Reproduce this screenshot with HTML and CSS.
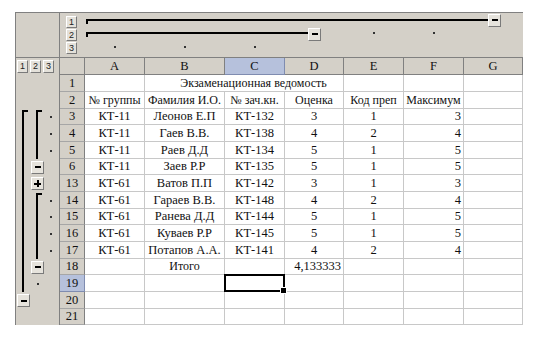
FILE: index.html
```html
<!DOCTYPE html>
<html lang="ru">
<head>
<meta charset="utf-8">
<title>Экзаменационная ведомость</title>
<link rel="stylesheet" href="styles.css">
</head>
<body>
<div class="sheet">
  <div class="top">
    <div class="corner"></div>
    <div class="levels">
      <span class="lb">1</span><span class="lb">2</span><span class="lb">3</span>
    </div>
    <div class="col-outline">
      <div class="cbar cbar1"><span class="line"></span><span class="ob minus"></span></div>
      <div class="cbar cbar2"><span class="line"></span><span class="ob minus"></span></div>
      <span class="dot dot2 ce"></span>
      <span class="dot dot2 cf"></span>
      <span class="dot dot3 ca"></span>
      <span class="dot dot3 cb"></span>
      <span class="dot dot3 cc"></span>
    </div>
  </div>
  <div class="main">
    <div class="side">
      <div class="side-levels">
        <span class="lb">1</span><span class="lb">2</span><span class="lb">3</span>
      </div>
      <div class="row-outline">
        <span class="br br1"></span>
        <span class="ob minus m1"></span>
        <span class="br br2a"></span>
        <span class="ob minus m2a"></span>
        <span class="ob plus p2"></span>
        <span class="br br2b"></span>
        <span class="ob minus m2b"></span>
        <span class="rdot r3"></span>
        <span class="rdot r4"></span>
        <span class="rdot r5"></span>
        <span class="rdot r8"></span>
        <span class="rdot r9"></span>
        <span class="rdot r10"></span>
        <span class="rdot r11"></span>
        <span class="rdot2 r13"></span>
      </div>
    </div>
    <div class="grid">
      <div class="ch"></div><div class="ch">A</div><div class="ch">B</div><div class="ch selh">C</div><div class="ch">D</div><div class="ch">E</div><div class="ch">F</div><div class="ch">G</div>

      <div class="rh">1</div><div class="c"></div><div class="c title">Экзаменационная ведомость</div><div class="c"></div><div class="c"></div><div class="c"></div>

      <div class="rh">2</div><div class="c hd">№ группы</div><div class="c hd">Фамилия И.О.</div><div class="c hd">№ зач.кн.</div><div class="c hd">Оценка</div><div class="c hd">Код преп</div><div class="c hd">Максимум</div><div class="c"></div>

      <div class="rh">3</div><div class="c">КТ-11</div><div class="c">Леонов Е.П</div><div class="c">КТ-132</div><div class="c">3</div><div class="c">1</div><div class="c r">3</div><div class="c"></div>
      <div class="rh">4</div><div class="c">КТ-11</div><div class="c">Гаев В.В.</div><div class="c">КТ-138</div><div class="c">4</div><div class="c">2</div><div class="c r">4</div><div class="c"></div>
      <div class="rh">5</div><div class="c">КТ-11</div><div class="c">Раев Д.Д</div><div class="c">КТ-134</div><div class="c">5</div><div class="c">1</div><div class="c r">5</div><div class="c"></div>
      <div class="rh">6</div><div class="c">КТ-11</div><div class="c">Заев Р.Р</div><div class="c">КТ-135</div><div class="c">5</div><div class="c">1</div><div class="c r">5</div><div class="c"></div>
      <div class="rh">13</div><div class="c">КТ-61</div><div class="c">Ватов П.П</div><div class="c">КТ-142</div><div class="c">3</div><div class="c">1</div><div class="c r">3</div><div class="c"></div>
      <div class="rh">14</div><div class="c">КТ-61</div><div class="c">Гараев В.В.</div><div class="c">КТ-148</div><div class="c">4</div><div class="c">2</div><div class="c r">4</div><div class="c"></div>
      <div class="rh">15</div><div class="c">КТ-61</div><div class="c">Ранева Д.Д</div><div class="c">КТ-144</div><div class="c">5</div><div class="c">1</div><div class="c r">5</div><div class="c"></div>
      <div class="rh">16</div><div class="c">КТ-61</div><div class="c">Куваев Р.Р</div><div class="c">КТ-145</div><div class="c">5</div><div class="c">1</div><div class="c r">5</div><div class="c"></div>
      <div class="rh">17</div><div class="c">КТ-61</div><div class="c">Потапов А.А.</div><div class="c">КТ-141</div><div class="c">4</div><div class="c">2</div><div class="c r">4</div><div class="c"></div>
      <div class="rh">18</div><div class="c"></div><div class="c hd">Итого</div><div class="c"></div><div class="c r">4,133333</div><div class="c"></div><div class="c"></div><div class="c"></div>
      <div class="rh selh">19</div><div class="c"></div><div class="c"></div><div class="c sel"></div><div class="c"></div><div class="c"></div><div class="c"></div><div class="c"></div>
      <div class="rh">20</div><div class="c"></div><div class="c"></div><div class="c"></div><div class="c"></div><div class="c"></div><div class="c"></div><div class="c"></div>
      <div class="rh">21</div><div class="c"></div><div class="c"></div><div class="c"></div><div class="c"></div><div class="c"></div><div class="c"></div><div class="c"></div>
    </div>
  </div>
</div>
</body>
</html>
```
FILE: styles.css
```css
* { box-sizing: border-box; }
html, body { margin: 0; padding: 0; background: #fff; }
body {
  font-family: "Liberation Serif", "Times New Roman", serif;
  font-size: 12.5px;
  color: #111;
}

.sheet {
  margin: 12px 0 0 15px;
  width: 508px;
  border-top: 1px solid #808080;
  border-left: 1px solid #808080;
}

/* top outline area */
.top {
  display: grid;
  grid-template-columns: 44px 25px 438px;
  height: 45px;
  background: #d4d0c8;
  border-bottom: 1px solid #808080;
}
.corner { border-right: 1px solid #808080; }
.levels {
  display: flex;
  flex-direction: column;
  gap: 1px;
  padding: 3px 0 0 6px;
}
.lb {
  display: block;
  width: 11px;
  height: 12px;
  background: #e4e1da;
  border: 1px solid;
  border-color: #fff #7a7a7a #7a7a7a #fff;
  font-family: "Liberation Sans", Arial, sans-serif;
  font-size: 9px;
  line-height: 10px;
  text-align: center;
  color: #222;
}

.col-outline {
  display: grid;
  grid-template-columns: 60px 80px 60px 59px 60px 60px 59px;
  grid-template-rows: 14px 14px 16px;
}
.cbar { display: flex; align-items: center; padding-left: 1px; }
.cbar1 { grid-column: 1 / 8; grid-row: 1; margin-right: 22px; }
.cbar2 { grid-column: 1 / 5; grid-row: 2; margin-right: 23px; }
.line {
  flex: 1;
  align-self: flex-start;
  height: 5px;
  border-top: 2px solid #000;
  border-left: 2px solid #000;
}
.cbar1 .line { margin-top: 6px; }
.cbar2 .line { margin-top: 5px; }

.dot {
  width: 2px;
  height: 2px;
  background: #333;
  justify-self: center;
  align-self: start;
  margin-top: 5px;
}
.dot2 { grid-row: 2; }
.dot3 { grid-row: 3; }
.ca { grid-column: 1; }
.cb { grid-column: 2; }
.cc { grid-column: 3; }
.ce { grid-column: 5; }
.cf { grid-column: 6; }

/* outline buttons */
.ob {
  display: flex;
  align-items: center;
  justify-content: center;
  width: 13px;
  height: 13px;
  flex: none;
  background: #e6e3dc;
  border: 1px solid;
  border-color: #fff #7a7a7a #7a7a7a #fff;
}
.minus::before {
  content: "";
  width: 6px;
  height: 2px;
  background: #000;
}
.plus { position: relative; }
.plus::before {
  content: "";
  width: 7px;
  height: 2px;
  background: #000;
}
.plus::after {
  content: "";
  position: absolute;
  left: 5px;
  top: 2px;
  width: 2px;
  height: 7px;
  background: #000;
}

/* main area */
.main { display: flex; }
.side {
  width: 44px;
  flex: none;
  background: #d4d0c8;
  border-right: 1px solid #808080;
}
.side-levels {
  height: 17px;
  display: flex;
  gap: 2px;
  padding: 2px 0 0 1px;
}
.side-levels .lb { height: 13px; line-height: 11px; }

.row-outline {
  display: grid;
  grid-template-columns: 15px 13px 15px;
  grid-template-rows: repeat(5, 17px 17px 16px);
}
.br {
  grid-column: 1;
  width: 6px;
  border-left: 2px solid #000;
  border-top: 2px solid #000;
  margin-top: 1px;
}
.br1 { grid-row: 3 / 14; margin-left: 6px; }
.br2a { grid-column: 2; grid-row: 3 / 6; margin-left: 5px; }
.br2b { grid-column: 2; grid-row: 8 / 12; margin-left: 5px; }
.row-outline .ob { justify-self: center; align-self: center; }
.m1 { grid-column: 1; grid-row: 14; }
.m2a { grid-column: 2; grid-row: 6; }
.p2 { grid-column: 2; grid-row: 7; }
.m2b { grid-column: 2; grid-row: 12; }

.rdot, .rdot2 {
  width: 2px;
  height: 2px;
  background: #333;
  align-self: center;
}
.rdot { grid-column: 3; justify-self: start; margin-left: 6px; }
.rdot2 { grid-column: 2; justify-self: center; }
.r3 { grid-row: 3; }
.r4 { grid-row: 4; }
.r5 { grid-row: 5; }
.r8 { grid-row: 8; }
.r9 { grid-row: 9; }
.r10 { grid-row: 10; }
.r11 { grid-row: 11; }
.r13 { grid-row: 13; }

/* cell grid */
.grid {
  display: grid;
  grid-template-columns: 25px 60px 80px 60px 59px 60px 60px 59px;
  grid-template-rows: 17px repeat(5, 17px 17px 16px);
}
.ch, .rh {
  background: #d4d0c8;
  border-right: 1px solid #808080;
  border-bottom: 1px solid #808080;
  display: flex;
  align-items: center;
  justify-content: center;
}
.rh { border-bottom-color: #a6a6a6; }
.selh {
  background: #b6c1dc;
  border-right-color: #7f8cb0;
  border-bottom-color: #7f8cb0;
}
.c {
  border-right: 1px solid #c8c8c8;
  border-bottom: 1px solid #c8c8c8;
  background: #fff;
  display: flex;
  align-items: center;
  justify-content: center;
  white-space: nowrap;
  padding: 0 2px;
}
.c.r { justify-content: flex-end; }
.hd { font-size: 12px; }
.title {
  grid-column: span 3;
  padding-left: 21px;
  font-size: 12px;
}
.sel { position: relative; }
.sel::before {
  content: "";
  position: absolute;
  left: -1px;
  top: -1px;
  right: -1px;
  bottom: -1px;
  border: 2px solid #000;
}
.sel::after {
  content: "";
  position: absolute;
  right: -3px;
  bottom: -3px;
  width: 5px;
  height: 5px;
  background: #000;
  border: 1px solid #fff;
}
```
